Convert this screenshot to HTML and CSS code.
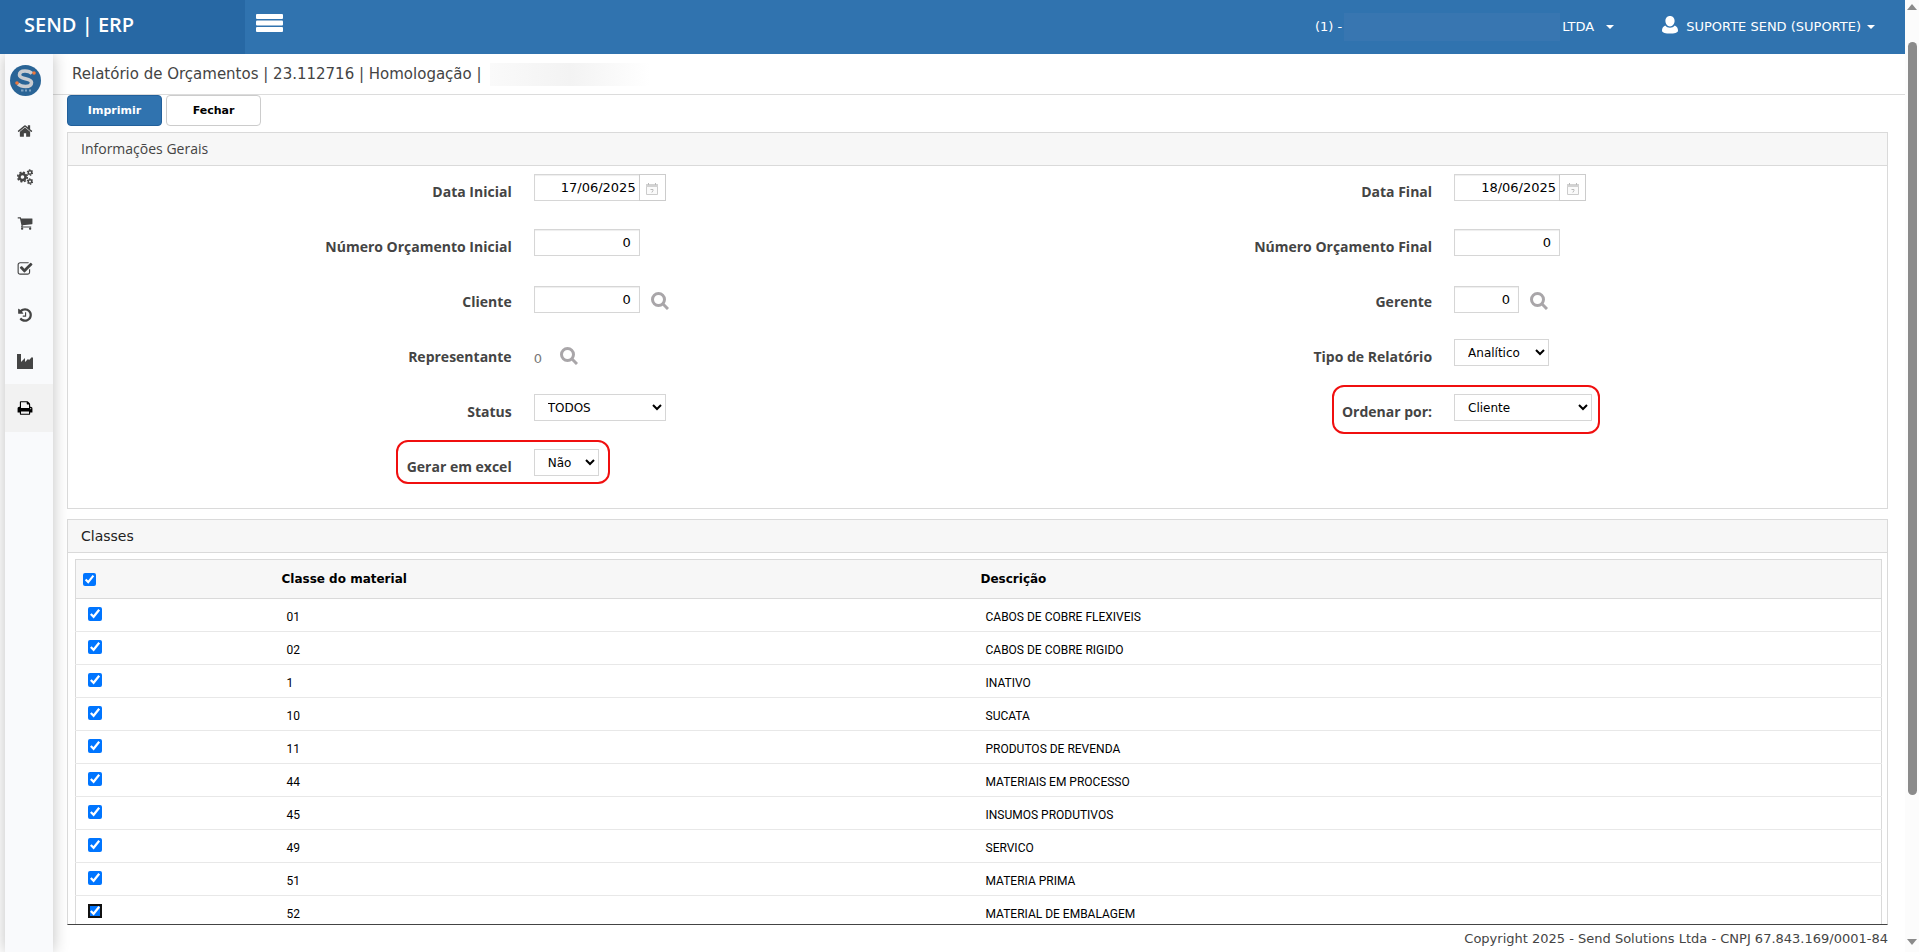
FILE: index.html
```html
<!DOCTYPE html>
<html lang="pt-BR">
<head>
<meta charset="utf-8">
<title>SEND | ERP</title>
<link rel="stylesheet" href="styles.css">
</head>
<body>
<div class="app">
  <header class="topbar">
    <div class="brand">SEND | ERP</div>
    <button class="menu-toggle" type="button" aria-label="Menu"><svg width="27" height="18" viewBox="0 0 27 18" fill="#fff"><rect width="27" height="5" rx="1"/><rect y="6.500" width="27" height="5" rx="1"/><rect y="13" width="27" height="5" rx="1"/></svg></button>
    <nav class="account">
      <a class="account-link company" href="#"><span>(1) -</span><span class="masked"></span><span>LTDA</span><span class="caret wide"></span></a>
      <a class="account-link" href="#"><svg class="user" width="16" height="18" viewBox="0 0 16 18" fill="#fff"><path d="M8 0c3 0 4.600 2.300 4.600 5S10.500 10.500 8 10.500 3.400 7.700 3.400 5 5 0 8 0zM3.200 9.500c1.300 1.500 2.900 2.200 4.800 2.200s3.500-.7 4.800-2.200C15 10.600 16 12.400 16 14.400 16 17 12 17.500 8 17.500s-8-.5-8-3.100c0-2 1-3.800 3.200-4.900z"/></svg><span>SUPORTE SEND (SUPORTE)</span><span class="caret"></span></a>
    </nav>
  </header>
  <div class="workspace">
    <nav class="sidebar">
      <a class="logo" href="#" aria-label="Send ERP"><svg width="31" height="31" viewBox="0 0 31 31"><circle cx="15.500" cy="15.500" r="15.500" fill="#2a6496"/><path d="M22 8.500C20 6.500 17.500 6 15 6c-3.500 0-5.500 1.500-5.500 4 0 5 12 2.500 12 7.500 0 2.600-2.500 4-6 4-3 0-5.500-.8-7.500-2.500" fill="none" stroke="#c9ccd0" stroke-width="3.600"/><circle cx="24" cy="8" r="1.800" fill="#f0783c"/><circle cx="7" cy="18" r="1.800" fill="#f0783c"/><path d="M11 25.500h2.500M15 25.500h2M19 25.500h2" stroke="#7fa3c4" stroke-width="2"/></svg></a>
      <a class="nav-item" href="#" aria-label="Início"><svg viewBox="0 0 1792 1792"><path d="M1472 992v480q0 26-19 45t-45 19h-384v-384h-256v384h-384q-26 0-45-19t-19-45v-480q0-1 .5-3t.5-3l575-474 575 474q1 2 1 6zm223-69l-62 74q-8 9-21 11h-3q-13 0-21-7l-692-577-692 577q-12 8-24 7-13-2-21-11l-62-74q-8-10-7-23.500t11-21.500l719-599q32-26 76-26t76 26l244 204v-195q0-14 9-23t23-9h192q14 0 23 9t9 23v408l219 182q10 8 11 21.500t-7 23.500z"/></svg></a>
      <a class="nav-item" href="#" aria-label="Configurações"><svg viewBox="0 0 16 16"><g fill="none" stroke="currentColor"><circle cx="5.500" cy="8" r="3.100" stroke-width="2.600"/><circle cx="5.500" cy="8" r="4.800" stroke-width="1.600" stroke-dasharray="2 1.770"/><circle cx="13" cy="3.500" r="1.700" stroke-width="1.400"/><circle cx="13" cy="3.500" r="2.700" stroke-width="1.100" stroke-dasharray="1.500 1.327"/><circle cx="13" cy="12.500" r="1.700" stroke-width="1.400"/><circle cx="13" cy="12.500" r="2.700" stroke-width="1.100" stroke-dasharray="1.500 1.327"/></g></svg></a>
      <a class="nav-item" href="#" aria-label="Vendas"><svg viewBox="0 0 1792 1792"><path d="M704 1536q0 52-38 90t-90 38-90-38-38-90 38-90 90-38 90 38 38 90zm896 0q0 52-38 90t-90 38-90-38-38-90 38-90 90-38 90 38 38 90zm128-1088v512q0 24-16.500 42.500t-40.500 21.500l-1044 122q13 60 13 70 0 16-24 64h920q26 0 45 19t19 45-19 45-45 19h-1024q-26 0-45-19t-19-45q0-11 8-31.500t16-36 21.500-40 15.500-29.500l-177-823h-204q-26 0-45-19t-19-45 19-45 45-19h256q16 0 28.500 6.500t19.500 15.500 13 24.500 8 26 5.500 29.500 4.500 26h1201q26 0 45 19t19 45z"/></svg></a>
      <a class="nav-item" href="#" aria-label="Tarefas"><svg viewBox="0 0 1792 1792"><path d="M1472 930v318q0 119-84.500 203.500t-203.500 84.500h-832q-119 0-203.500-84.500t-84.500-203.500v-832q0-119 84.500-203.500t203.500-84.500h832q63 0 117 25 15 7 18 23 3 17-9 29l-49 49q-10 10-23 10-3 0-9-2-23-6-45-6h-832q-66 0-113 47t-47 113v832q0 66 47 113t113 47h832q66 0 113-47t47-113v-254q0-13 9-22l64-64q10-10 23-10 6 0 12 3 20 8 20 29zm231-489l-814 814q-24 24-57 24t-57-24l-430-430q-24-24-24-57t24-57l110-110q24-24 57-24t57 24l263 263 647-647q24-24 57-24t57 24l110 110q24 24 24 57t-24 57z"/></svg></a>
      <a class="nav-item" href="#" aria-label="Histórico"><svg viewBox="0 0 1792 1792"><path d="M1664 896q0 156-61 298t-164 245-245 164-298 61q-172 0-327-72.500t-264-204.500q-7-10-6.500-22.500t8.500-20.500l137-138q10-9 25-9 16 2 23 12 73 95 179 147t225 52q104 0 198.500-40.500t163.500-109.500 109.500-163.500 40.500-198.500-40.500-198.500-109.500-163.500-163.500-109.500-198.500-40.500q-98 0-188 35.500t-160 101.500l137 138q31 30 14 69-17 40-59 40h-448q-26 0-45-19t-19-45v-448q0-42 40-59 39-17 69 14l130 129q107-101 244.500-156.500t284.500-55.500q156 0 298 61t245 164 164 245 61 298zm-640-288v448q0 14-9 23t-23 9h-320q-14 0-23-9t-9-23v-64q0-14 9-23t23-9h224v-352q0-14 9-23t23-9h64q14 0 23 9t9 23z"/></svg></a>
      <a class="nav-item" href="#" aria-label="Indústria"><svg viewBox="0 0 16 16"><path d="M0 1h4v8l4-4v4l3-3 1 1 3-3 1 1v11H0z"/></svg></a>
      <a class="nav-item active" href="#" aria-label="Relatórios"><svg viewBox="0 0 1792 1792"><path d="M448 1536h896v-256h-896v256zm0-640h896v-384h-160q-40 0-68-28t-28-68v-160h-640v640zm1152 64q0-26-19-45t-45-19-45 19-19 45 19 45 45 19 45-19 19-45zm128 0v416q0 13-9.500 22.500t-22.500 9.500h-224v160q0 40-28 68t-68 28h-960q-40 0-68-28t-28-68v-160h-224q-13 0-22.500-9.500t-9.500-22.500v-416q0-79 56.500-135.500t135.500-56.500h64v-544q0-40 28-68t68-28h672q40 0 88 20t76 48l152 152q28 28 48 76t20 88v256h64q79 0 135.500 56.500t56.500 135.500z"/></svg></a>
    </nav>
    <main class="content">
      <h1 class="page-title"><span>Relatório de Orçamentos | 23.112716 | Homologação |</span><span class="masked-title"></span></h1>
      <div class="page-body">
        <div class="actions">
          <button class="btn primary" type="button">Imprimir</button>
          <button class="btn" type="button">Fechar</button>
        </div>
        <section class="panel">
          <h2 class="panel-title soft">Informações Gerais</h2>
          <form class="fields">
            <label for="dt-ini">Data Inicial</label>
            <div class="control"><input id="dt-ini" class="box medium date" type="text" value="17/06/2025"><button class="calendar" type="button" aria-label="Abrir calendário"><svg width="12" height="12" viewBox="0 0 12 12"><path d="M.5 2h11v9.500H.5z" fill="#fafafa" stroke="#ccc"/><path d="M0 1h12v3H0z" fill="#d2d2d2"/><path d="M2.500 0v2M9.500 0v2" stroke="#bbb"/><path d="M4.500 6.500h2.500v1L5.800 9.500" fill="none" stroke="#bbb"/></svg></button></div>
            <label for="dt-fim">Data Final</label>
            <div class="control"><input id="dt-fim" class="box medium date" type="text" value="18/06/2025"><button class="calendar" type="button" aria-label="Abrir calendário"><svg width="12" height="12" viewBox="0 0 12 12"><path d="M.5 2h11v9.500H.5z" fill="#fafafa" stroke="#ccc"/><path d="M0 1h12v3H0z" fill="#d2d2d2"/><path d="M2.500 0v2M9.500 0v2" stroke="#bbb"/><path d="M4.500 6.500h2.500v1L5.800 9.500" fill="none" stroke="#bbb"/></svg></button></div>

            <label for="nr-ini">Número Orçamento Inicial</label>
            <div class="control"><input id="nr-ini" class="box medium" type="text" value="0"></div>
            <label for="nr-fim">Número Orçamento Final</label>
            <div class="control"><input id="nr-fim" class="box medium" type="text" value="0"></div>

            <label for="cliente">Cliente</label>
            <div class="control lookup"><input id="cliente" class="box medium" type="text" value="0"><button class="search" type="button" aria-label="Pesquisar cliente"><svg width="18" height="18" viewBox="0 0 18 18" fill="none" stroke="#a9a6a9" stroke-width="3"><circle cx="7.500" cy="7.500" r="6"/><path d="M11.800 11.800l5.200 5.200"/></svg></button></div>
            <label for="gerente">Gerente</label>
            <div class="control lookup"><input id="gerente" class="box small" type="text" value="0"><button class="search" type="button" aria-label="Pesquisar gerente"><svg width="18" height="18" viewBox="0 0 18 18" fill="none" stroke="#a9a6a9" stroke-width="3"><circle cx="7.500" cy="7.500" r="6"/><path d="M11.800 11.800l5.200 5.200"/></svg></button></div>

            <label for="representante">Representante</label>
            <div class="control lookup"><output id="representante" class="value">0</output><button class="search" type="button" aria-label="Pesquisar representante"><svg width="18" height="18" viewBox="0 0 18 18" fill="none" stroke="#a9a6a9" stroke-width="3"><circle cx="7.500" cy="7.500" r="6"/><path d="M11.800 11.800l5.200 5.200"/></svg></button></div>
            <label for="tipo">Tipo de Relatório</label>
            <div class="control"><select id="tipo" class="box select-type"><option>Analítico</option></select></div>

            <label for="status">Status</label>
            <div class="control"><select id="status" class="box select-status"><option>TODOS</option></select></div>
            <label for="ordem">Ordenar por:</label>
            <div class="control"><select id="ordem" class="box select-order"><option>Cliente</option></select><span class="marker marker-order"></span></div>

            <label for="excel">Gerar em excel</label>
            <div class="control"><select id="excel" class="box small"><option>Não</option></select><span class="marker marker-excel"></span></div>
          </form>
        </section>
        <section class="panel grows">
          <h2 class="panel-title wide">Classes</h2>
          <table class="grid">
            <colgroup><col class="col-check"><col class="col-code"><col></colgroup>
            <thead><tr><th><input type="checkbox" aria-label="Selecionar todas" checked></th><th>Classe do material</th><th>Descrição</th></tr></thead>
            <tbody>
              <tr><td><input type="checkbox" aria-label="01" checked></td><td>01</td><td>CABOS DE COBRE FLEXIVEIS</td></tr>
              <tr><td><input type="checkbox" aria-label="02" checked></td><td>02</td><td>CABOS DE COBRE RIGIDO</td></tr>
              <tr><td><input type="checkbox" aria-label="1" checked></td><td>1</td><td>INATIVO</td></tr>
              <tr><td><input type="checkbox" aria-label="10" checked></td><td>10</td><td>SUCATA</td></tr>
              <tr><td><input type="checkbox" aria-label="11" checked></td><td>11</td><td>PRODUTOS DE REVENDA</td></tr>
              <tr><td><input type="checkbox" aria-label="44" checked></td><td>44</td><td>MATERIAIS EM PROCESSO</td></tr>
              <tr><td><input type="checkbox" aria-label="45" checked></td><td>45</td><td>INSUMOS PRODUTIVOS</td></tr>
              <tr><td><input type="checkbox" aria-label="49" checked></td><td>49</td><td>SERVICO</td></tr>
              <tr><td><input type="checkbox" aria-label="51" checked></td><td>51</td><td>MATERIA PRIMA</td></tr>
              <tr><td><input class="focused" type="checkbox" aria-label="52" checked></td><td>52</td><td>MATERIAL DE EMBALAGEM</td></tr>
            </tbody>
          </table>
        </section>
        <footer class="footer">Copyright 2025 - Send Solutions Ltda - CNPJ 67.843.169/0001-84</footer>
      </div>
    </main>
  </div>
</div>
<div class="scrollbar" aria-hidden="true">
  <svg width="10" height="6" viewBox="0 0 10 6" fill="#8b8b8b"><path d="M5 0l5 6H0z"/></svg>
  <div class="track"><div class="thumb"></div></div>
  <svg width="10" height="6" viewBox="0 0 10 6" fill="#8b8b8b"><path d="M0 0h10L5 6z"/></svg>
</div>
</body>
</html>
```
FILE: styles.css
```css
* { box-sizing: border-box; }

body {
  margin: 0;
  display: flex;
  height: 100vh;
  overflow: hidden;
  background: #fff;
  color: #444;
  font: 12px/20px "DejaVu Sans", Verdana, sans-serif;
}

a { color: inherit; text-decoration: none; }
button { font: inherit; padding: 0; cursor: pointer; }

.app { flex: 1; display: flex; flex-direction: column; min-width: 0; }

/* top bar */
.topbar {
  display: flex;
  height: 54px;
  background: #3073af;
  color: #fff;
  font-size: 13px;
}
.brand {
  width: 245px;
  padding: 15px 24px;
  background: #2768a4;
  font: 600 20px/20px "Open Sans", sans-serif;
}
.menu-toggle {
  align-self: flex-start;
  margin: 14px 0 0 11px;
  border: 0;
  background: none;
  line-height: 0;
}
.account { display: flex; gap: 48px; margin-left: auto; padding-right: 30px; }
.account-link { display: flex; align-items: center; }
.masked {
  width: 216px;
  height: 28px;
  margin: 0 2px;
  background: #3876b1;
}
.caret {
  margin-left: 6px;
  border: 4px solid transparent;
  border-top-color: #fff;
  border-bottom: 0;
}
.caret.wide { margin-left: 12px; }
.user { margin: -4px 8px 0 0; }

/* sidebar */
.workspace { flex: 1; display: flex; min-height: 0; }
.sidebar {
  width: 48px;
  margin-left: 5px;
  background: #f9fafc;
  box-shadow: 0 0 16px rgba(0, 0, 0, .25);
  clip-path: inset(0 -20px 0 -5px);
}
.logo { display: block; height: 54px; padding: 11px 0 0 5px; }
.nav-item {
  display: flex;
  align-items: center;
  height: 46px;
  padding-left: 12px;
}
.nav-item svg { width: 16px; height: 16px; fill: currentColor; }
.nav-item.active { height: 48px; background: #f2f2f2; color: #000; }

/* content */
.content { flex: 1; display: flex; flex-direction: column; min-width: 0; }
.page-title {
  display: flex;
  align-items: center;
  height: 41px;
  margin: 0;
  padding-left: 19px;
  border-bottom: 1px solid #dcdcdc;
  font-size: 15px;
  font-weight: normal;
}
.masked-title {
  width: 160px;
  height: 23px;
  margin-left: 8px;
  background: linear-gradient(90deg, #fafafa, #f3f3f3 50%, #fff);
}
.page-body {
  flex: 1;
  display: flex;
  flex-direction: column;
  min-height: 0;
  padding: 0 17px 0 14px;
}
.actions { display: flex; gap: 4px; margin-bottom: 6px; }
.btn {
  width: 95px;
  height: 31px;
  border: 1px solid #ccc;
  border-radius: 4px;
  background: #fff;
  color: #000;
  font-size: 11px;
  font-weight: bold;
}
.btn.primary { background: #3073af; border-color: #22609b; color: #fff; }

.panel { border: 1px solid #dadada; }
.panel.grows {
  flex: 1;
  min-height: 0;
  margin-top: 10px;
  overflow: hidden;
  border-bottom-color: #444;
}
.panel-title {
  margin: 0;
  padding: 6px 13px;
  border-bottom: 1px solid #dadada;
  background: #f7f7f7;
  color: #222;
  font: 14px/20px "Open Sans", sans-serif;
}
.panel-title.soft { color: #444; }
.panel-title.wide { font-family: "DejaVu Sans", Verdana, sans-serif; }

.fields {
  display: grid;
  grid-template-columns: 25.6% 25% 25.6% 1fr;
  grid-auto-rows: 55px;
  padding-bottom: 12px;
}
.fields label {
  padding: 16px 22px 0 0;
  text-align: right;
  font: bold 14px/20px "Open Sans", sans-serif;
}
.control { position: relative; display: flex; align-items: flex-start; padding-top: 8px; }
.control.lookup { padding-top: 10px; }
.box {
  height: 27px;
  border: 1px solid #d6d6d6;
  border-radius: 0;
  background: #fff;
  color: #000;
  font: inherit;
}
input.box { padding: 0 8px; text-align: right; font-size: 13px; box-shadow: inset 0 1px 1px #eee; }
input.box.date { padding-right: 3px; }
select.box { padding: 0 0 0 9px; }
.medium { width: 106px; }
.small { width: 65px; }
.select-type { width: 95px; }
.select-status { width: 132px; }
.select-order { width: 138px; }
.calendar {
  width: 27px;
  height: 27px;
  margin-left: -1px;
  padding-top: 6px;
  border: 1px solid #ccc;
  background: #fff;
}
.search { margin: 6px 0 0 11px; border: 0; background: none; line-height: 0; }
.value { width: 15px; padding-top: 8px; color: #777; font-size: 13px; }

.marker {
  position: absolute;
  border: 2px solid #f00f0f;
  border-radius: 12px;
  pointer-events: none;
}
.marker-excel { left: -138px; top: -1px; width: 214px; height: 44px; }
.marker-order { left: -122px; top: -1px; width: 268px; height: 49px; }

/* classes table */
.grid {
  width: calc(100% - 12px);
  margin: 6px 5px 0 7px;
  border: 1px solid #dadada;
  border-collapse: collapse;
  table-layout: fixed;
  color: #000;
}
.col-check { width: 199px; }
.col-code { width: 699px; }
.grid th {
  height: 39px;
  padding: 0 7px;
  border-bottom: 1px solid #dadada;
  background: #f7f7f7;
  text-align: left;
}
.grid td {
  height: 33px;
  padding: 4px 12px 0;
  border-top: 1px solid #e8e8e8;
  font: 12px/20px Roboto, sans-serif;
}
.grid input { display: block; width: 13px; height: 13px; margin: 0; }
.grid td input { width: 14px; height: 14px; margin-bottom: 6px; }
.grid td .focused { outline: 2px solid #111; outline-offset: -2px; border-radius: 3px; }

.footer { padding: 4px 0; height: 27px; text-align: right; font-size: 13px; }

/* scrollbar */
.scrollbar {
  display: flex;
  flex-direction: column;
  align-items: center;
  width: 14px;
  padding: 4px 0 7px;
  background: #fcfcfc;
}
.track { flex: 1; width: 9px; padding: 32px 0 0; }
.thumb { height: 84%; border-radius: 5px; background: #8b8b8b; }
```
